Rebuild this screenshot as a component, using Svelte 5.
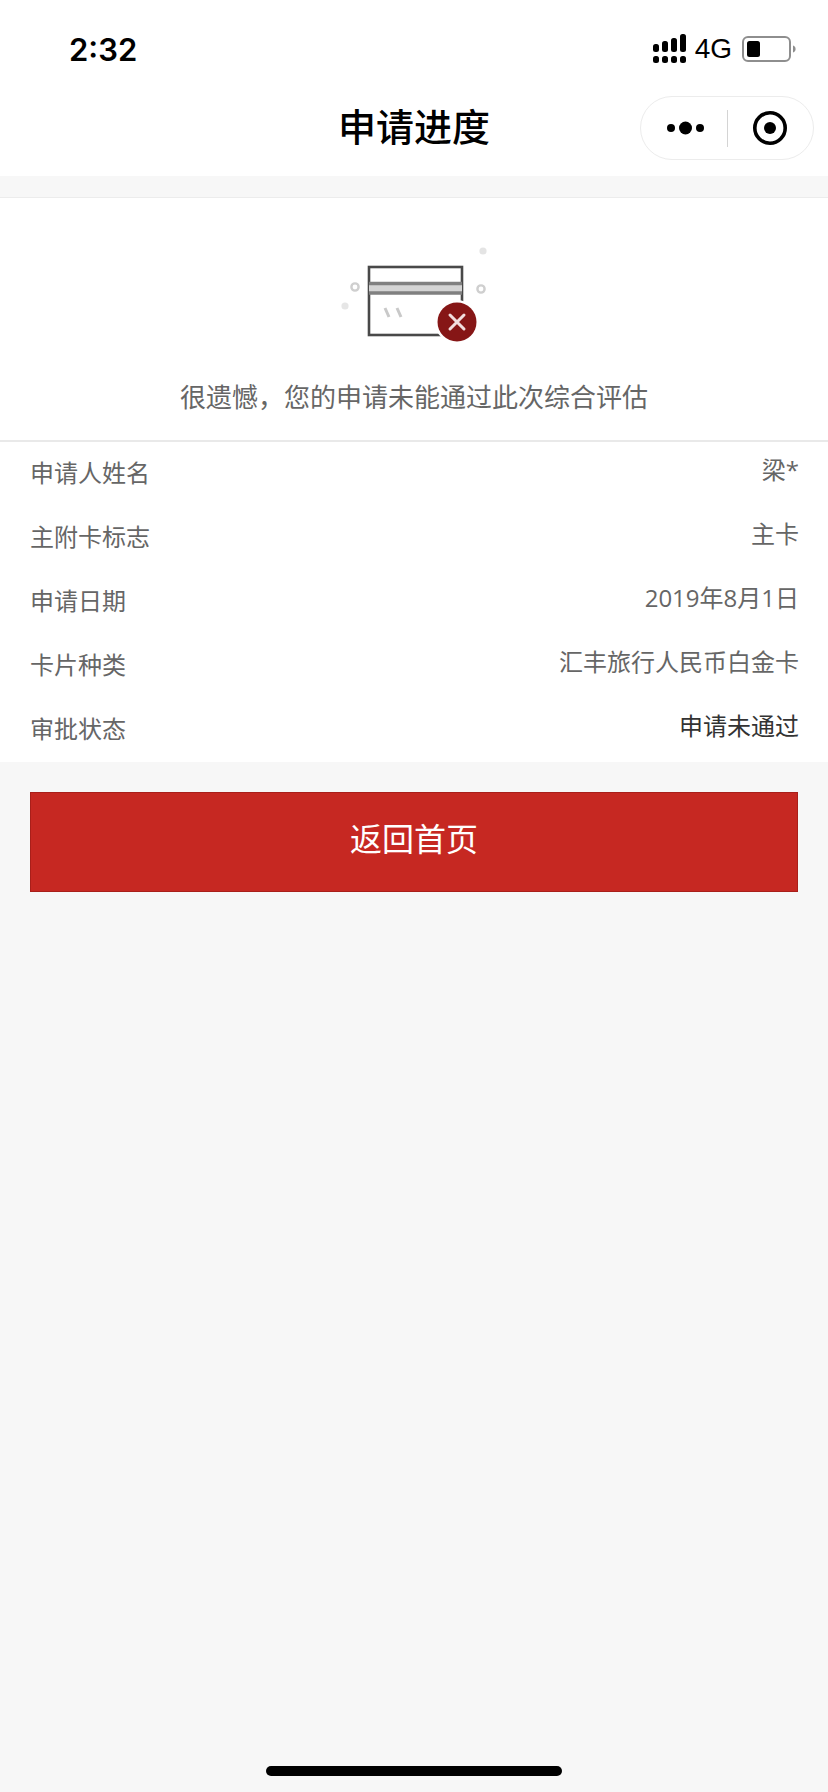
<script lang="ts">
  // Page « progression de la demande » : lignes de détail dans l'ordre d'affichage.
  const rows = [
    { label: '申请人姓名', value: '梁*' },
    { label: '主附卡标志', value: '主卡' },
    { label: '申请日期', value: '2019年8月1日' },
    { label: '卡片种类', value: '汇丰旅行人民币白金卡' },
    { label: '审批状态', value: '申请未通过', strong: true }
  ];
  const signal = [
    { x: 0, top: 11, h: 8 },
    { x: 9, top: 8, h: 11 },
    { x: 18, top: 5, h: 14 },
    { x: 27, top: 1, h: 18 }
  ];
</script>

<div class="page">
  <header class="top">
    <div class="status">
      <span class="time">2:32</span>
      <div class="status-right">
        <svg class="signal" width="33" height="32" viewBox="0 0 33 32" aria-hidden="true">
          {#each signal as s (s.x)}
            <rect x={s.x} y={s.top} width="6" height={s.h} rx="2.5" fill="#000" />
            <rect x={s.x} y="23" width="6" height="7" rx="2.5" fill="#000" />
          {/each}
        </svg>
        <span class="net">4G</span>
        <svg class="battery" width="54" height="26" viewBox="0 0 54 26" aria-hidden="true">
          <rect x="1" y="1" width="47" height="24" rx="5" fill="#fff" stroke="#8e8e8e" stroke-width="2" />
          <rect x="5" y="5" width="13" height="16" rx="2.5" fill="#000" />
          <path d="M51 9.5c1.6.6 2.6 1.8 2.6 3.5s-1 2.9-2.6 3.5z" fill="#8e8e8e" />
        </svg>
      </div>
    </div>
    <div class="nav">
      <h1>申请进度</h1>
      <div class="capsule">
        <svg class="more" width="37" height="14" viewBox="0 0 37 14" aria-hidden="true">
          <circle cx="4" cy="7" r="4" />
          <circle cx="18.5" cy="7" r="6.5" />
          <circle cx="33" cy="7" r="4" />
        </svg>
        <i class="sep"></i>
        <svg class="target" width="36" height="36" viewBox="0 0 36 36" aria-hidden="true">
          <circle cx="18" cy="18" r="15.2" fill="none" stroke="#000" stroke-width="3.6" />
          <circle cx="18" cy="18" r="6" fill="#000" />
        </svg>
      </div>
    </div>
  </header>

  <main>
    <section class="result">
      <svg class="card" width="180" height="120" viewBox="0 0 180 120" role="img" aria-label="申请未通过">
        <defs>
          <filter id="soft" x="-10%" y="-10%" width="120%" height="120%">
            <feGaussianBlur stdDeviation="0.7" />
          </filter>
        </defs>
        <g filter="url(#soft)">
          <circle cx="159" cy="8" r="3.6" fill="#e4e4e4" />
          <circle cx="31" cy="44" r="3.6" fill="none" stroke="#cfcfcf" stroke-width="2.4" />
          <circle cx="157" cy="46" r="3.6" fill="none" stroke="#cfcfcf" stroke-width="2.4" />
          <circle cx="21" cy="63" r="3.6" fill="#e6e6e6" />
          <rect x="45" y="24" width="93" height="68" fill="#fff" stroke="#4a4a4a" stroke-width="2.6" />
          <rect x="45" y="40" width="93" height="10" fill="#d4d4d4" />
          <path d="M45 40.5h93M45 50h93" stroke="#808080" stroke-width="3.4" />
          <path d="M61 65l4 9M73 65l4 9" stroke="#c9c9c9" stroke-width="3" />
          <circle cx="133" cy="79" r="22" fill="#fff" />
          <circle cx="133" cy="79" r="19.5" fill="#861717" />
          <path d="M126 72l14 14M140 72l-14 14" stroke="#f1dede" stroke-width="3" stroke-linecap="round" />
        </g>
      </svg>
      <p>很遗憾，您的申请未能通过此次综合评估</p>
    </section>

    <dl class="details">
      {#each rows as row (row.label)}
        <div class="row">
          <dt>{row.label}</dt>
          <dd class:strong={row.strong}>{row.value}</dd>
        </div>
      {/each}
    </dl>

    <div class="actions">
      <button type="button">返回首页</button>
    </div>
  </main>

  <div class="home-bar"></div>
</div>

<style>
  :global(body) {
    margin: 0;
    background: #f7f7f7;
  }
  .page {
    position: relative;
    height: 1792px;
    overflow: hidden;
    background: #f7f7f7;
    font-family: 'Liberation Sans', 'Noto Sans CJK SC', sans-serif;
    color: #666;
  }
  .top {
    background: #fff;
  }
  .status {
    height: 88px;
    display: flex;
    justify-content: space-between;
    align-items: center;
    box-sizing: border-box;
    padding: 10px 32px 0 69px;
  }
  .time {
    font-family: Inter, 'Liberation Sans', sans-serif;
    font-size: 31px;
    font-weight: 600;
    color: #000;
  }
  .status-right {
    display: flex;
    align-items: center;
  }
  .signal {
    margin-right: 9px;
  }
  .net {
    font-family: 'Liberation Sans', sans-serif;
    font-size: 28px;
    color: #000;
    margin-right: 10px;
  }
  .nav {
    position: relative;
    height: 88px;
    display: flex;
    justify-content: center;
    align-items: center;
  }
  h1 {
    margin: 0;
    padding-bottom: 16px;
    font-size: 38px;
    font-weight: 500;
    color: #000;
    font-family: 'Noto Sans CJK SC', sans-serif;
  }
  .capsule {
    position: absolute;
    left: 640px;
    top: 8px;
    width: 174px;
    height: 64px;
    box-sizing: border-box;
    border: 1px solid #ececec;
    border-radius: 32px;
    background: #fff;
    display: flex;
    align-items: center;
  }
  .more {
    margin-left: 26px;
    fill: #000;
  }
  .sep {
    width: 1px;
    height: 37px;
    background: #d4d4d4;
    margin-left: 23px;
  }
  .target {
    margin-left: 24px;
  }
  main {
    padding-top: 21px;
  }
  .result {
    background: #fff;
    border-top: 1px solid #ececec;
    border-bottom: 2px solid #e9e9e9;
    height: 245px;
    box-sizing: border-box;
    display: flex;
    flex-direction: column;
    align-items: center;
    padding-top: 45px;
  }
  .card {
    display: block;
  }
  .result p {
    margin: 16px 0 0;
    font-size: 26px;
    line-height: 38px;
    color: #666;
  }
  .details {
    margin: 0;
    background: #fff;
    padding: 0 29px 0 30px;
  }
  .row {
    height: 64px;
    display: flex;
    justify-content: space-between;
    align-items: center;
  }
  dt {
    font-size: 24px;
    color: #666;
    padding-bottom: 6px;
  }
  dd {
    margin: 0;
    font-family: 'Open Sans', 'Noto Sans CJK SC', sans-serif;
    font-size: 24px;
    color: #666;
    padding-bottom: 12px;
  }
  dd.strong {
    color: #333;
  }
  .actions {
    padding: 30px 30px 0;
  }
  button {
    display: block;
    width: 100%;
    height: 100px;
    border: 1px solid #a91f1a;
    border-radius: 0;
    background: #c62822;
    color: #fff;
    font-family: inherit;
    font-size: 32px;
    padding: 0 0 10px;
  }
  .home-bar {
    position: absolute;
    left: 266px;
    bottom: 16px;
    width: 296px;
    height: 10px;
    border-radius: 5px;
    background: #000;
  }
</style>
